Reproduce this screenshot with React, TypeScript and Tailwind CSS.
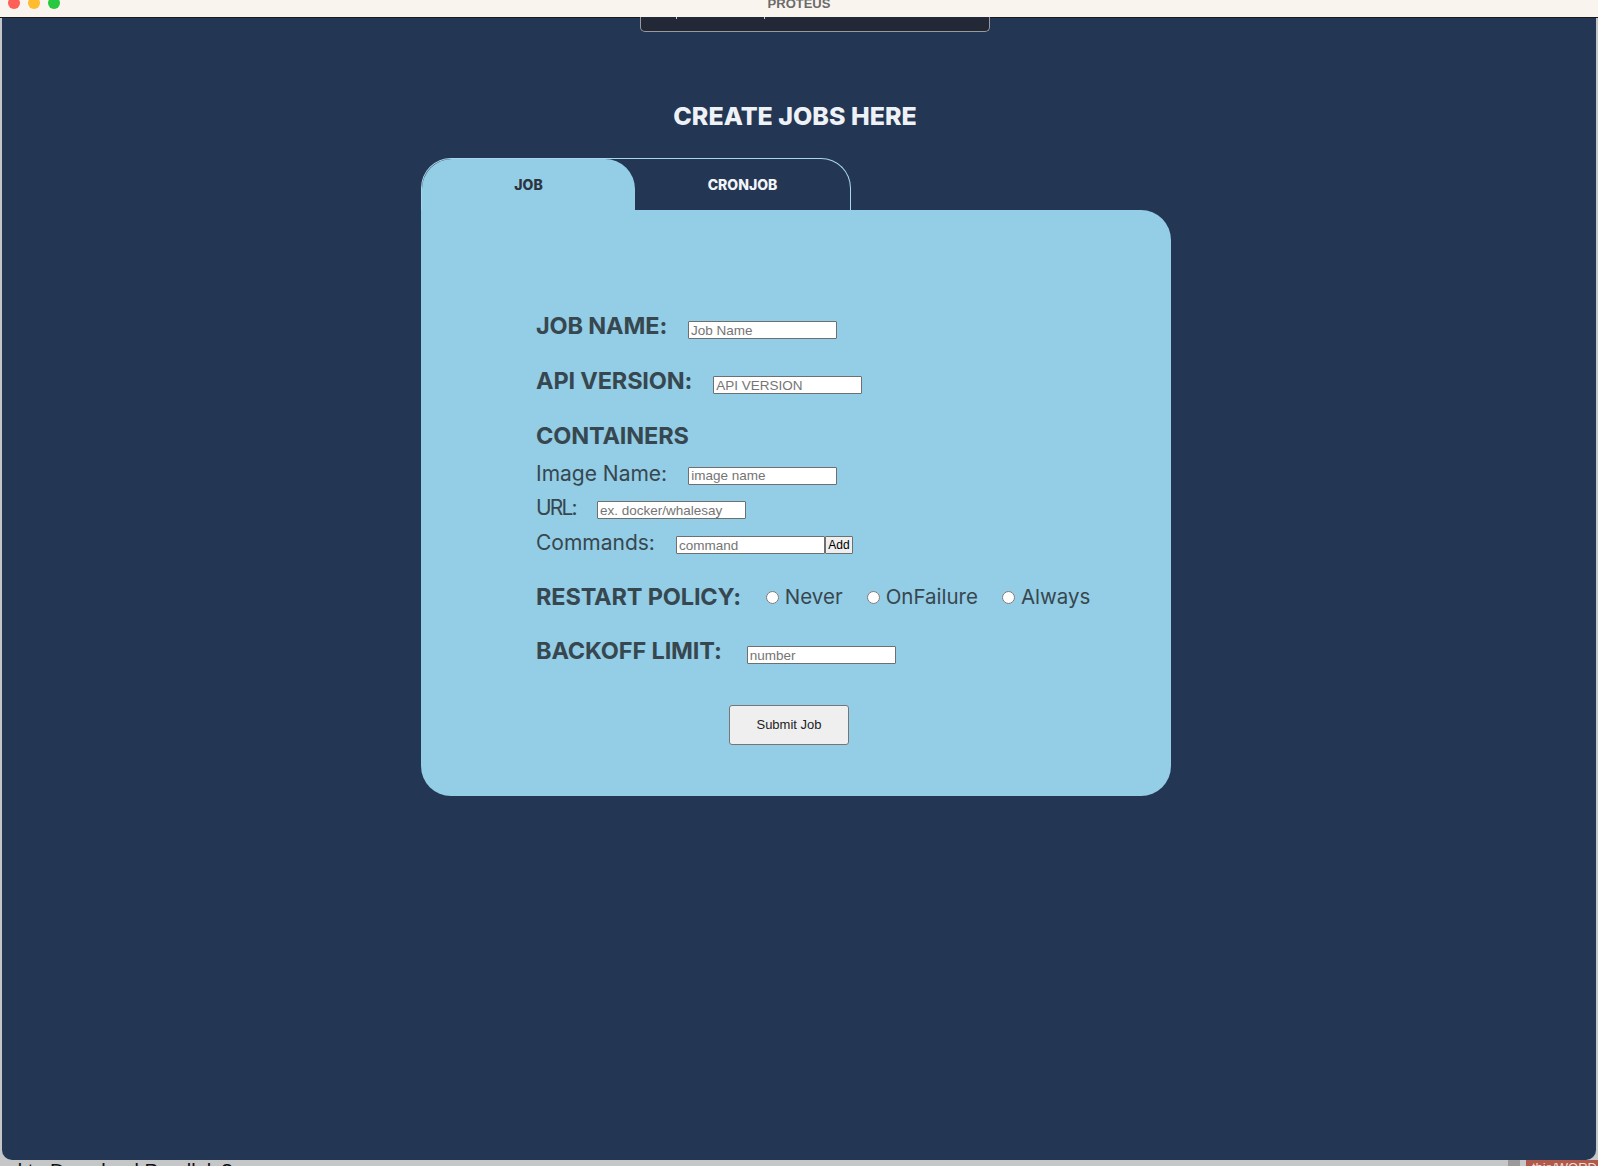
import React from "react";

const labelBold = "font-['Inter',sans-serif] font-bold text-[23.5px] tracking-[-0.15px] leading-[36px] text-[#37474f] whitespace-nowrap";
const labelReg = "font-['Inter',sans-serif] font-normal text-[21px] leading-[34px] text-[#37474f] whitespace-nowrap";
const inputCls =
  "w-[149px] h-[18px] border border-[#6f6f6f] bg-white px-[2px] text-[13.5px] leading-[16px] text-black placeholder:text-[#757575] font-['Liberation_Sans',Arial,sans-serif] outline-none rounded-[1px]";

function Radio({ label }: { label: string }) {
  return (
    <label className="flex items-center gap-[6px]">
      <input type="radio" name="restart" className="w-[13px] h-[13px] m-0" />
      <span className="font-['Inter',sans-serif] text-[20.5px] leading-[36px] text-[#37474f]">{label}</span>
    </label>
  );
}

export default function App() {
  return (
    <div className="w-[1598px] h-[1166px] bg-[#c5c6c8] relative overflow-hidden flex flex-col">
      {/* title bar */}
      <div className="h-[18px] bg-[#f9f5ee] relative shrink-0 border-b border-[#1a1a1a]">
        <div className="absolute left-[8px] top-[-3px] w-[12px] h-[12px] rounded-full bg-[#fe5f57]" />
        <div className="absolute left-[28px] top-[-3px] w-[12px] h-[12px] rounded-full bg-[#febc2e]" />
        <div className="absolute left-[48px] top-[-3px] w-[12px] h-[12px] rounded-full bg-[#28c840]" />
        <div className="absolute inset-x-0 top-[-3px] text-center font-['Liberation_Sans',Arial,sans-serif] font-bold text-[13px] leading-[14px] text-[#6b6b6b]">
          PROTEUS
        </div>
      </div>

      {/* main dark area */}
      <div className="mx-[2px] h-[1142px] shrink-0 bg-[#233654] rounded-b-[10px] relative flex flex-col">
        {/* notch overlay */}
        <div className="absolute left-[638px] top-[-1px] w-[350px] h-[15px] bg-[#222836] border border-t-0 border-[#9a9a9a] rounded-b-[5px]">
          <div className="absolute left-[35px] top-0 w-px h-[2px] bg-[#cfcfcf]" />
          <div className="absolute left-[123px] top-0 w-px h-[2px] bg-[#cfcfcf]" />
        </div>

        <div className="pt-[82px] text-center font-['Inter',sans-serif] font-extrabold text-[25px] leading-[32px] text-[#eef1f5]">
          <span className="inline-block -ml-[8px]">CREATE JOBS HERE</span>
        </div>

        <div className="ml-[419px] mt-[26px] flex flex-col">
          {/* tabs */}
          <div className="w-[430px] h-[52px] border border-b-0 border-[#a8d6ea] rounded-t-[30px] flex">
            <div className="w-[213px] h-full bg-[#93cde6] rounded-t-[30px] flex items-center justify-center font-['Inter',sans-serif] font-extrabold text-[14px] text-[#2b3540]">
              JOB
            </div>
            <div className="flex-1 h-full flex items-center justify-center font-['Inter',sans-serif] font-extrabold text-[14px] text-[#f2f4f7]">
              CRONJOB
            </div>
          </div>

          {/* card */}
          <div className="w-[750px] h-[586px] bg-[#93cde6] rounded-[30px] rounded-tl-none pt-[98px] pl-[115px] flex flex-col">
            <div className="h-[36px] flex items-center gap-[21px]">
              <span className={labelBold}>JOB NAME:</span>
              <input className={inputCls + " mt-[8px]"} placeholder="Job Name" />
            </div>
            <div className="mt-[19px] h-[36px] flex items-center gap-[21px]">
              <span className={labelBold}>API VERSION:</span>
              <input className={inputCls + " mt-[8px]"} placeholder="API VERSION" />
            </div>
            <div className="mt-[19px] h-[36px] flex items-center">
              <span className={labelBold}>CONTAINERS</span>
            </div>
            <div className="mt-[3px] h-[34px] flex items-center gap-[21px]">
              <span className={labelReg}>Image Name:</span>
              <input className={inputCls + " mt-[3px]"} placeholder="image name" />
            </div>
            <div className="h-[34px] flex items-center gap-[21px]">
              <span className={labelReg + " text-[20px] tracking-[-1.8px]"}>URL:</span>
              <input className={inputCls + " mt-[4px]"} placeholder="ex. docker/whalesay" />
            </div>
            <div className="mt-[1px] h-[34px] flex items-center gap-[21px]">
              <span className={labelReg}>Commands:</span>
              <div className="flex items-center mt-[4px]">
                <input className={inputCls} placeholder="command" />
                <button className="w-[28px] h-[18px] bg-[#efefef] border border-[#6f6f6f] text-[12px] leading-[14px] text-black font-['Liberation_Sans',Arial,sans-serif] rounded-[1px]">
                  Add
                </button>
              </div>
            </div>
            <div className="mt-[19px] h-[36px] flex items-center">
              <span className={labelBold}>RESTART POLICY:</span>
              <div className="ml-[25px] flex items-center gap-[24px]">
                <Radio label="Never" />
                <Radio label="OnFailure" />
                <Radio label="Always" />
              </div>
            </div>
            <div className="mt-[18px] h-[36px] flex items-center gap-[25px]">
              <span className={labelBold}>BACKOFF LIMIT:</span>
              <input className={inputCls + " mt-[8px]"} placeholder="number" />
            </div>
            <div className="mt-[36px] ml-[193px]">
              <button className="w-[120px] h-[40px] bg-[#efefef] border border-[#767676] rounded-[3px] text-[13px] text-[#222] font-['Liberation_Sans',Arial,sans-serif]">
                Submit Job
              </button>
            </div>
          </div>
        </div>
      </div>

      {/* bottom strip (background desktop content) */}
      <div className="flex-1 relative overflow-hidden">
        <div className="absolute left-0 top-[1px] font-['Liberation_Sans',Arial,sans-serif] text-[20px] leading-[20px] text-[#111] whitespace-nowrap">
          ed to Download Parallels?
        </div>
        <div className="absolute left-[1508px] top-0 w-[12px] h-full bg-[#9a9a9a]" />
        <div className="absolute left-[1526px] top-0 w-[72px] h-full bg-[#b05a4c] overflow-hidden">
          <div className="pl-[6px] pt-[1px] text-[13px] leading-[13px] text-[#f3dcd6] font-['Liberation_Sans',Arial,sans-serif] whitespace-nowrap">
            this/WORD
          </div>
        </div>
      </div>
    </div>
  );
}
